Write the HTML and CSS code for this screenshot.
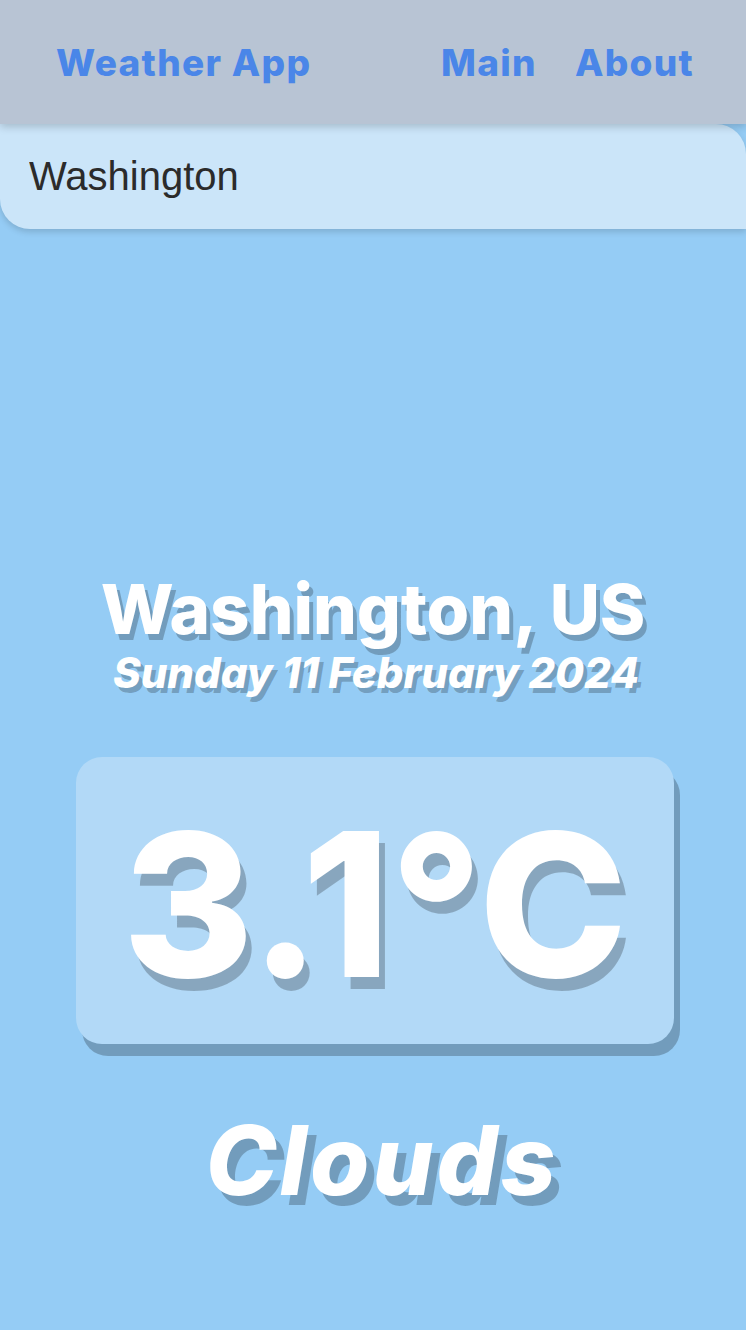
FILE: index.html
```html
<!DOCTYPE html>
<html lang="en">
<head>
<meta charset="utf-8">
<title>Weather App</title>
<link rel="stylesheet" href="styles.css">
</head>
<body>
<header class="topbar">
  <a class="brand" href="#">Weather App</a>
  <nav class="nav">
    <a class="nav-link" href="#">Main</a>
    <a class="nav-link" href="#">About</a>
  </nav>
</header>
<div class="search">
  <input class="search-input" type="text" value="Washington">
</div>
<main class="weather">
  <h1 class="city">Washington, US</h1>
  <p class="date">Sunday 11 February 2024</p>
  <div class="temp-card">
    <span class="temp">3.1°C</span>
  </div>
  <p class="condition">Clouds</p>
</main>
</body>
</html>
```
FILE: styles.css
```css
html, body {
  margin: 0;
  padding: 0;
}
body {
  background: #95ccf5;
  font-family: Inter, "Open Sans", sans-serif;
  min-height: 1330px;
  overflow: hidden;
}
.topbar {
  position: relative;
  z-index: 2;
  height: 124px;
  background: #b8c4d4;
  display: flex;
  align-items: center;
  justify-content: space-between;
  padding: 0 52px 0 56px;
  box-shadow: 0 3px 8px rgba(0, 0, 0, 0.18);
}
.brand, .nav-link {
  color: #4a86e8;
  text-decoration: none;
  font-weight: 800;
  font-size: 37px;
  line-height: 1;
  letter-spacing: 1.3px;
}
.nav {
  display: flex;
  gap: 38px;
}
.search {
  position: relative;
  z-index: 1;
}
.search-input {
  display: block;
  box-sizing: border-box;
  width: 100%;
  height: 105px;
  margin: 0;
  border: none;
  outline: none;
  background: #cbe5f9;
  border-radius: 0 30px 0 30px;
  padding: 0 0 0 29px;
  font-family: "Liberation Sans", Arial, sans-serif;
  font-size: 40px;
  color: #2b2b2b;
  box-shadow: 0 3px 6px rgba(0, 0, 0, 0.15);
}
.weather {
  display: flex;
  flex-direction: column;
  align-items: center;
  padding-top: 346px;
  color: #fff;
}
.city {
  margin: 0;
  font-size: 69px;
  line-height: 1;
  font-weight: 800;
  text-shadow: 4px 6px 0 rgba(0, 0, 0, 0.23);
}
.date {
  margin: 8px 0 0 6px;
  font-size: 42px;
  line-height: 1;
  font-weight: 800;
  font-style: italic;
  text-shadow: 4px 5px 0 rgba(0, 0, 0, 0.23);
}
.temp-card {
  margin-top: 63px;
  width: 598px;
  height: 287px;
  align-self: flex-start;
  margin-left: 76px;
  background: #b2d9f7;
  border-radius: 26px;
  box-shadow: 6px 12px 0 rgba(0, 0, 0, 0.23);
  display: flex;
  align-items: center;
  justify-content: center;
}
.temp {
  font-size: 200px;
  line-height: 1;
  font-weight: 800;
  margin-top: 6px;
  text-shadow: 6px 12px 0 rgba(0, 0, 0, 0.23);
}
.condition {
  margin: 68px 0 0 18px;
  font-size: 96px;
  line-height: 1;
  font-weight: 800;
  font-style: italic;
  letter-spacing: 3px;
  text-shadow: 8px 10px 0 rgba(0, 0, 0, 0.23);
}
```
